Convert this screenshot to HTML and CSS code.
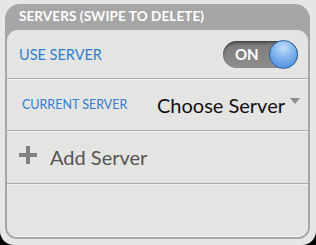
FILE: index.html
```html
<!DOCTYPE html>
<html lang="en">
<head>
    <meta charset="UTF-8">
    <title>Preferences</title>
    <link rel="stylesheet" href="styles.css">
</head>
<body>
    <div class="dialog">
        <div class="group">
            <div class="groupTitle">SERVERS (SWIPE TO DELETE)</div>
            <div class="groupBody">
                <div class="row first">
                    <div class="label big">USE SERVER</div>
                    <div class="toggle">
                        <span class="toggleText">ON</span>
                        <span class="knob"></span>
                    </div>
                </div>
                <div class="row">
                    <div class="label small">CURRENT SERVER</div>
                    <div class="picker">
                        <span>Choose Server</span>
                        <span class="arrow"></span>
                    </div>
                </div>
                <div class="row add">
                    <svg class="plus" width="18" height="18" viewBox="0 0 18 18">
                        <rect x="7" y="0" width="4" height="18" fill="#808080"/>
                        <rect x="0" y="7" width="18" height="4" fill="#808080"/>
                    </svg>
                    <span>Add Server</span>
                </div>
                <div class="row empty"></div>
            </div>
        </div>
    </div>
</body>
</html>
```
FILE: styles.css
```css
:root{
    --panel: #e4e4e2;
    --frame: #a6a6a6;
    --blue: #2f7fcf;
}
html{
    height: 100%;
}
body{
    margin: 0;
    height: 100%;
    background: #000000;
    font-family: 'Lato', sans-serif;
}
.dialog{
    height: 100%;
    box-sizing: border-box;
    background: #e6e6e4;
    border-radius: 0 0 14px 14px;
    padding: 4px 6px 6px 5px;
}
.group{
    background: var(--frame);
    border-radius: 15px 15px 12px 12px;
    padding: 0 2px 2px 2px;
    height: 100%;
    box-sizing: border-box;
    display: flex;
    flex-direction: column;
}
.groupTitle{
    height: 26px;
    line-height: 24px;
    padding-left: 12px;
    color: #ffffff;
    font-weight: 700;
    font-size: 13.5px;
    letter-spacing: 0.1px;
}
.groupBody{
    flex: 1;
    background: var(--panel);
    border-radius: 11px 11px 10px 10px;
    display: flex;
    flex-direction: column;
    box-shadow: inset 0 -1px 0 #f4f4f2;
}
.row{
    display: flex;
    align-items: center;
    justify-content: space-between;
    padding: 0 10px 0 12px;
    height: 51px;
    flex-shrink: 0;
    border-bottom: 1px solid #acacaa;
    box-shadow: 0 1px 0 #f2f2f0;
}
.first{
    height: 48px;
}
.label{
    color: var(--blue);
}
.big{
    font-size: 14.5px;
}
.small{
    font-size: 12.5px;
    padding-left: 3px;
}
.toggle{
    position: relative;
    width: 75px;
    height: 27px;
    border-radius: 14px;
    background: linear-gradient(#7a7a7a, #8e8e8e);
    box-shadow: inset 0 2px 3px rgba(0,0,0,0.45);
    display: flex;
    align-items: center;
}
.toggleText{
    color: #ffffff;
    font-weight: 700;
    font-size: 15px;
    padding-left: 12px;
}
.knob{
    position: absolute;
    right: 0;
    top: -1px;
    width: 27px;
    height: 27px;
    border-radius: 50%;
    border: 1px solid #2a5f9e;
    background: radial-gradient(circle at 50% 25%, #c4defa 0%, #7fb3ee 45%, #3f86d8 100%);
}
.picker{
    display: flex;
    align-items: center;
    gap: 5px;
    font-size: 20px;
    color: #111111;
}
.arrow{
    width: 0;
    height: 0;
    border-left: 5px solid transparent;
    border-right: 5px solid transparent;
    border-top: 6px solid #8c8c8c;
    margin-top: -8px;
    margin-right: -2px;
}
.add{
    justify-content: flex-start;
    gap: 13px;
    font-size: 20px;
    color: #555555;
    height: 52px;
}
.plus{
    margin-top: -4px;
}
.empty{
    flex: 1;
    border-bottom: none;
    box-shadow: none;
}
```
